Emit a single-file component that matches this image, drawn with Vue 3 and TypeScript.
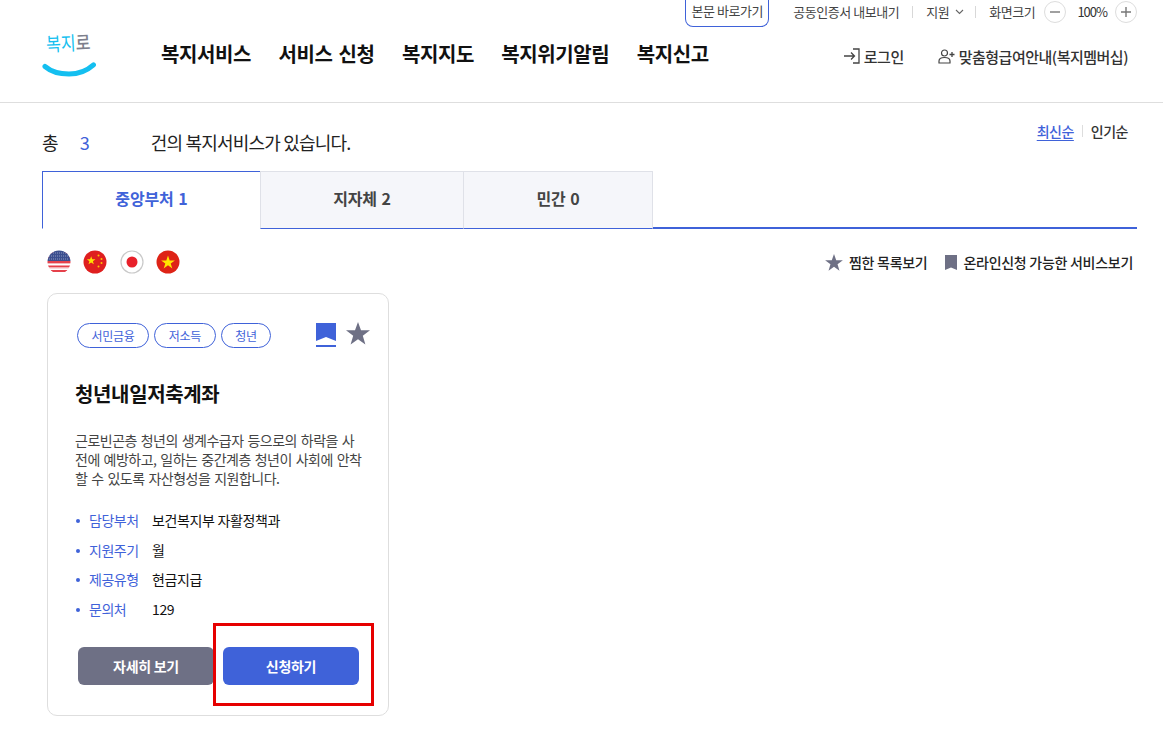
<template>
  <div class="page">
    <header class="site-header">
      <div class="util-row">
        <a class="skip-link">본문 바로가기</a>
        <span class="util-item cert">공동인증서 내보내기</span>
        <i class="util-sep"></i>
        <span class="util-item lang">
          지원
          <svg width="9" height="6" viewBox="0 0 9 6"><path d="M1 1l3.5 3.5L8 1" fill="none" stroke="#666" stroke-width="1.1" /></svg>
        </span>
        <i class="util-sep last"></i>
        <span class="util-item">화면크기</span>
        <span class="zoom-btn minus"><svg width="10" height="10" viewBox="0 0 10 10"><path d="M0 5h10" stroke="#777" stroke-width="1.4" /></svg></span>
        <span class="zoom-value">100%</span>
        <span class="zoom-btn"><svg width="10" height="10" viewBox="0 0 10 10"><path d="M0 5h10M5 0v10" stroke="#777" stroke-width="1.4" /></svg></span>
      </div>

      <div class="main-row">
        <div class="logo">
          <span class="logo-text"><b>복지</b><em>로</em></span>
          <svg class="logo-smile" width="54" height="15" viewBox="0 0 54 15">
            <path d="M3 4.500C10 10.500 18 12 27 12S44 9.500 51.500 2.800" fill="none" stroke="#14bff0" stroke-width="5" stroke-linecap="round" />
          </svg>
        </div>
        <nav class="gnb">
          <a v-for="item in navItems" :key="item">{{ item }}</a>
        </nav>
        <div class="member">
          <a class="member-link login">
            <svg width="16" height="16" viewBox="0 0 16 16">
              <path d="M0 8h10M7 4.500L10.500 8 7 11.500M9 1h6v14H9" fill="none" stroke="#444" stroke-width="1.300" />
            </svg>
            로그인
          </a>
          <a class="member-link">
            <svg width="17" height="15" viewBox="0 0 17 15">
              <circle cx="6.500" cy="4" r="3" fill="none" stroke="#444" stroke-width="1.200" />
              <path d="M1 14v-2c0-2 2-3.500 5.500-3.500S12 10 12 12v2z" fill="none" stroke="#444" stroke-width="1.200" />
              <path d="M11.500 5.500h5M14 3v5" stroke="#444" stroke-width="1.300" />
            </svg>
            맞춤형급여안내(복지멤버십)
          </a>
        </div>
      </div>
    </header>

    <main class="content">
      <div class="summary-row">
        <p class="summary">
          <span>총</span>
          <strong>3</strong>
          <span>건의 복지서비스가 있습니다.</span>
        </p>
        <div class="sort">
          <a class="active">최신순</a>
          <i></i>
          <a>인기순</a>
        </div>
      </div>

      <div class="tabs">
        <button
          v-for="(tab, index) in tabs"
          :key="tab"
          class="tab"
          :class="{ selected: index === 0, wide: index === 1 }"
        >
          {{ tab }}
        </button>
      </div>

      <div class="tool-row">
        <div class="flags">
          <svg class="flag" width="24" height="24" viewBox="0 0 24 24">
            <defs><clipPath id="c1"><circle cx="12" cy="12" r="11.500" /></clipPath></defs>
            <g clip-path="url(#c1)">
              <rect width="24" height="24" fill="#fff" />
              <path d="M0 3h24M0 7.500h24M0 12h24M0 16.500h24M0 21h24" stroke="#e5414b" stroke-width="2" />
              <rect x="0" y="0" width="24" height="11" fill="#3c4f8f" />
              <path d="M2 3h20M2 6h20M2 9h20" stroke="#8d98bf" stroke-width="1" stroke-dasharray="1 1" />
              <path d="M0 13.500h24M0 18h24" stroke="#f2b8bb" stroke-width="1" />
            </g>
          </svg>
          <svg class="flag" width="24" height="24" viewBox="0 0 24 24">
            <circle cx="12" cy="12" r="11.500" fill="#df1f1f" />
            <path d="M8 5.500l1.500 4.300h4.500l-3.600 2.700 1.300 4.300L8 14.200l-3.700 2.600 1.300-4.300L2 9.800h4.500z" transform="translate(2.400 2.200) scale(.72)" fill="#ffe000" />
            <circle cx="15.500" cy="5.500" r="1" fill="#ffc400" />
            <circle cx="18.500" cy="9" r="1" fill="#ffc400" />
            <circle cx="18.500" cy="13" r="1" fill="#ffc400" />
            <circle cx="15.500" cy="16.500" r="1" fill="#ffc400" />
          </svg>
          <svg class="flag" width="24" height="24" viewBox="0 0 24 24">
            <circle cx="12" cy="12" r="11" fill="#fff" stroke="#c9c9c9" stroke-width="1.200" />
            <circle cx="12" cy="12" r="5.500" fill="#e8202a" />
          </svg>
          <svg class="flag" width="24" height="24" viewBox="0 0 24 24">
            <circle cx="12" cy="12" r="11.500" fill="#de2316" />
            <path d="M12 5.500l1.700 4.900h5.200l-4.200 3 1.600 5-4.300-3.100-4.300 3.100 1.600-5-4.200-3h5.200z" fill="#ffe600" />
          </svg>
        </div>
        <div class="filters">
          <a class="filter">
            <svg width="18" height="17" viewBox="0 0 24 23"><path :d="starPath" fill="#6e7085" /></svg>
            찜한 목록보기
          </a>
          <a class="filter">
            <svg width="12" height="15" viewBox="0 0 12 15"><path d="M0 0h12v15L6 12.500 0 15z" fill="#6e7085" /></svg>
            온라인신청 가능한 서비스보기
          </a>
        </div>
      </div>

      <article class="card">
        <div class="card-top">
          <div class="tags">
            <span v-for="tag in tags" :key="tag" class="tag">{{ tag }}</span>
          </div>
          <div class="card-icons">
            <svg width="20" height="24" viewBox="0 0 20 24">
              <path d="M0 0h20v18l-10-4-10 4z" fill="#3f62d9" />
              <rect y="22" width="20" height="2" fill="#3f62d9" />
            </svg>
            <svg class="card-star" width="24" height="23" viewBox="0 0 24 23"><path :d="starPath" fill="#6e7085" /></svg>
          </div>
        </div>
        <h2 class="card-title">청년내일저축계좌</h2>
        <p class="card-desc">
          근로빈곤층 청년의 생계수급자 등으로의 하락을 사전에 예방하고, 일하는 중간계층 청년이 사회에 안착할 수 있도록 자산형성을 지원합니다.
        </p>
        <ul class="info-list">
          <li v-for="row in infoRows" :key="row.label">
            <span class="info-label">{{ row.label }}</span>
            <span class="info-value">{{ row.value }}</span>
          </li>
        </ul>
        <div class="card-actions">
          <button class="btn btn-gray">자세히 보기</button>
          <button class="btn btn-blue">신청하기</button>
          <div class="highlight"></div>
        </div>
      </article>
    </main>
  </div>
</template>

<script setup lang="ts">
interface InfoRow {
  label: string;
  value: string;
}

const navItems = ['복지서비스', '서비스 신청', '복지지도', '복지위기알림', '복지신고'];
const tabs = ['중앙부처 1', '지자체 2', '민간 0'];
const tags = ['서민금융', '저소득', '청년'];
const starPath = 'M12 0l3 8.300h9l-7.200 5.400 2.600 8.800L12 17.300l-7.400 5.200 2.600-8.800L0 8.300h9z';

const infoRows: InfoRow[] = [
  { label: '담당부처', value: '보건복지부 자활정책과' },
  { label: '지원주기', value: '월' },
  { label: '제공유형', value: '현금지급' },
  { label: '문의처', value: '129' }
];
</script>

<style>
html,
body {
  margin: 0;
  background: #fff;
}
</style>

<style scoped>
.page {
  width: 1163px;
  height: 734px;
  overflow: hidden;
  font-family: 'Noto Sans CJK KR', 'Noto Sans', sans-serif;
  color: #111;
  background: #fff;
}

a {
  cursor: pointer;
}

.site-header {
  height: 102px;
  border-bottom: 1px solid #dedede;
}

.util-row {
  display: flex;
  align-items: center;
  justify-content: flex-end;
  box-sizing: border-box;
  height: 27px;
  padding: 0 26px 4px 0;
  font-size: 13px;
  letter-spacing: -0.45px;
  color: #444;
}

.skip-link {
  display: flex;
  align-items: center;
  justify-content: center;
  align-self: flex-start;
  box-sizing: border-box;
  width: 84px;
  height: 28px;
  margin-top: -1px;
  margin-right: 24px;
  padding-bottom: 4px;
  border: 1px solid #3f62d9;
  border-top: 0;
  border-radius: 0 0 8px 8px;
}

.util-sep {
  width: 1px;
  height: 12px;
  margin: 0 13px;
  background: #d8d8d8;
}

.util-sep.last {
  margin: 0 13px 0 11px;
}

.lang {
  display: flex;
  align-items: center;
  gap: 6px;
}

.zoom-btn {
  display: flex;
  align-items: center;
  justify-content: center;
  box-sizing: border-box;
  width: 22px;
  height: 22px;
  border: 1px solid #ddd;
  border-radius: 50%;
}

.minus {
  margin-left: 9px;
}

.zoom-value {
  margin: 0 8px 0 11px;
  color: #333;
  letter-spacing: -1px;
}

.main-row {
  display: flex;
  align-items: flex-start;
  padding-left: 42px;
}

.logo {
  position: relative;
  width: 54px;
  height: 50px;
  margin-top: 2px;
}

.logo-text {
  display: block;
  padding-left: 4px;
  font-size: 16px;
  line-height: 26px;
  white-space: nowrap;
  transform: rotate(-3deg) scaleY(1.2);
  color: #14bff0;
}

.logo-text b {
  font-weight: 400;
}

.logo-text em {
  font-style: normal;
  font-weight: 500;
  color: #7d7f8c;
}

.logo-smile {
  position: absolute;
  left: 0;
  top: 33px;
}

.gnb {
  display: flex;
  gap: 27.400px;
  margin: 13px 0 0 65px;
  font-size: 20px;
  font-weight: 700;
  line-height: 28px;
  letter-spacing: -0.4px;
  word-spacing: 2px;
  color: #111;
  white-space: nowrap;
}

.member {
  display: flex;
  gap: 34px;
  margin-left: auto;
  padding: 15px 35px 0 0;
  font-size: 15px;
  font-weight: 500;
  letter-spacing: -0.5px;
  color: #333;
}

.member-link {
  display: flex;
  align-items: center;
  gap: 4px;
  height: 28px;
}

.content {
  padding: 0 26px 0 42px;
}

.summary-row {
  display: flex;
  justify-content: space-between;
  align-items: flex-start;
  height: 68px;
}

.summary {
  display: flex;
  margin: 27px 0 0;
  font-size: 18px;
  line-height: 25px;
  letter-spacing: -0.8px;
  color: #222;
}

.summary strong {
  box-sizing: border-box;
  width: 93px;
  padding-left: 22px;
  font-weight: 400;
  color: #3f62d9;
}

.sort {
  display: flex;
  align-items: center;
  gap: 8px;
  margin: 18px 9px 0 0;
  font-size: 14px;
  font-weight: 500;
  letter-spacing: -0.5px;
  color: #333;
}

.sort i {
  width: 1px;
  height: 12px;
  background: #ddd;
}

.sort .active {
  color: #3f62d9;
  text-decoration: underline;
  text-underline-offset: 3px;
}

.tabs {
  display: flex;
  align-items: flex-start;
  box-sizing: border-box;
  height: 58px;
  border-bottom: 2px solid #3f62d9;
}

.tab {
  flex-shrink: 0;
  box-sizing: border-box;
  width: 190px;
  height: 58px;
  margin-left: -1px;
  padding-bottom: 6px;
  border: 1px solid #dfe1e8;
  border-bottom: 1px solid #3f62d9;
  background: #f5f6fa;
  font-family: inherit;
  font-size: 16px;
  font-weight: 700;
  letter-spacing: -0.2px;
  word-spacing: 1.500px;
  color: #444;
}

.tab.wide {
  width: 204px;
}

.tab.selected {
  width: 219px;
  margin-left: 0;
  border: 1px solid #3f62d9;
  border-bottom: 1px solid #fff;
  background: #fff;
  color: #3f62d9;
}

.tool-row {
  display: flex;
  justify-content: space-between;
  align-items: center;
  box-sizing: border-box;
  height: 64px;
  padding-top: 2px;
}

.flags {
  display: flex;
  gap: 12.600px;
  padding-left: 4.500px;
}

.flag {
  display: block;
}

.filters {
  display: flex;
  gap: 18px;
  padding-right: 4px;
  font-size: 14px;
  font-weight: 500;
  letter-spacing: -0.28px;
  color: #222;
}

.filter {
  display: flex;
  align-items: center;
  gap: 6px;
}

.card {
  box-sizing: border-box;
  width: 342px;
  height: 423px;
  margin-left: 5px;
  padding: 29px 18px 0 27px;
  border: 1px solid #dedede;
  border-radius: 10px;
}

.card-top {
  display: flex;
  justify-content: space-between;
  align-items: flex-start;
}

.tags {
  display: flex;
  gap: 5px;
  padding-left: 2px;
}

.tag {
  display: flex;
  align-items: center;
  justify-content: center;
  box-sizing: border-box;
  height: 25px;
  padding: 0 13.600px;
  border: 1px solid #3f62d9;
  border-radius: 13px;
  font-size: 12px;
  letter-spacing: -0.3px;
  color: #3f62d9;
}

.card-icons {
  display: flex;
  align-items: flex-start;
  gap: 10px;
}

.card-star {
  margin-top: -1px;
}

.card-title {
  margin: 31px 0 0;
  font-size: 20px;
  font-weight: 700;
  line-height: 30px;
  letter-spacing: -0.35px;
  color: #111;
}

.card-desc {
  width: 290px;
  margin: 22px 0 0;
  font-size: 14px;
  line-height: 19px;
  letter-spacing: -0.5px;
  word-spacing: 1.200px;
  word-break: break-all;
  color: #444;
}

.info-list {
  margin: 22px 0 0;
  padding: 0;
  list-style: none;
}

.info-list li {
  position: relative;
  display: flex;
  height: 29.500px;
  padding-left: 14px;
  font-size: 14px;
  line-height: 21px;
  letter-spacing: -0.35px;
}

.info-list li::before {
  content: '';
  position: absolute;
  left: 1px;
  top: 9px;
  width: 4px;
  height: 4px;
  border-radius: 50%;
  background: #3f62d9;
}

.info-label {
  width: 63px;
  letter-spacing: -0.5px;
  color: #3f62d9;
}

.info-value {
  color: #111;
}

.card-actions {
  position: relative;
  display: flex;
  gap: 9px;
  margin-top: 19px;
  padding-left: 3px;
}

.btn {
  box-sizing: border-box;
  width: 136px;
  height: 38px;
  border: 0;
  border-radius: 6px;
  font-family: inherit;
  font-size: 14px;
  font-weight: 700;
  letter-spacing: -0.3px;
  color: #fff;
}

.btn-gray {
  background: #6e7085;
}

.btn-blue {
  background: #3f62d9;
}

.highlight {
  position: absolute;
  left: 138px;
  top: -24px;
  width: 161px;
  height: 83px;
  box-sizing: border-box;
  border: 3px solid #e60000;
}
</style>
